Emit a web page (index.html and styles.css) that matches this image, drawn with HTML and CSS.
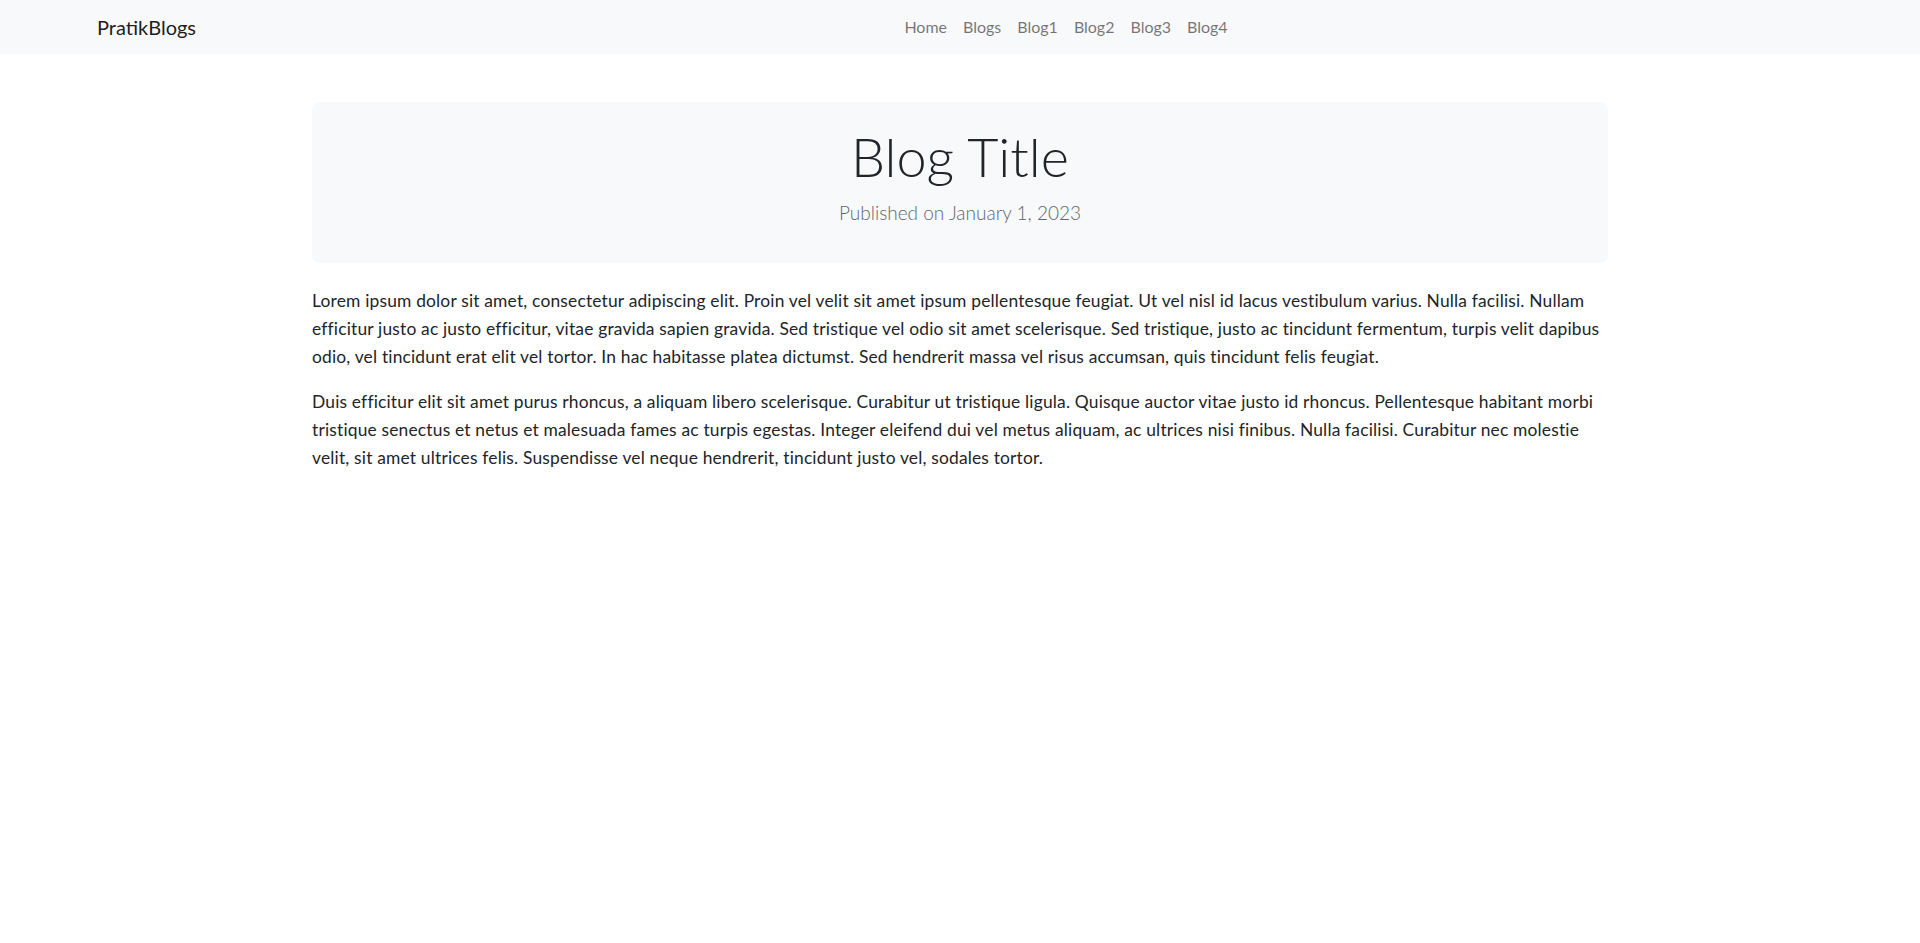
FILE: index.html
```html
<!DOCTYPE html>
<html lang="en">
<head>
<meta charset="utf-8">
<title>PratikBlogs</title>
<link rel="stylesheet" href="styles.css">
</head>
<body>
<nav class="navbar">
  <a class="brand" href="#">PratikBlogs</a>
  <ul class="nav">
    <li><a href="#">Home</a></li>
    <li><a href="#">Blogs</a></li>
    <li><a href="#">Blog1</a></li>
    <li><a href="#">Blog2</a></li>
    <li><a href="#">Blog3</a></li>
    <li><a href="#">Blog4</a></li>
  </ul>
</nav>
<main class="container">
  <header class="hero">
    <h1 class="hero-title">Blog Title</h1>
    <p class="hero-lead">Published on January 1, 2023</p>
  </header>
  <article class="post">
    <p>Lorem ipsum dolor sit amet, consectetur adipiscing elit. Proin vel velit sit amet ipsum pellentesque feugiat. Ut vel nisl id lacus vestibulum varius. Nulla facilisi. Nullam efficitur justo ac justo efficitur, vitae gravida sapien gravida. Sed tristique vel odio sit amet scelerisque. Sed tristique, justo ac tincidunt fermentum, turpis velit dapibus odio, vel tincidunt erat elit vel tortor. In hac habitasse platea dictumst. Sed hendrerit massa vel risus accumsan, quis tincidunt felis feugiat.</p>
    <p>Duis efficitur elit sit amet purus rhoncus, a aliquam libero scelerisque. Curabitur ut tristique ligula. Quisque auctor vitae justo id rhoncus. Pellentesque habitant morbi tristique senectus et netus et malesuada fames ac turpis egestas. Integer eleifend dui vel metus aliquam, ac ultrices nisi finibus. Nulla facilisi. Curabitur nec molestie velit, sit amet ultrices felis. Suspendisse vel neque hendrerit, tincidunt justo vel, sodales tortor.</p>
  </article>
</main>
</body>
</html>
```

FILE: styles.css
```css
* { box-sizing: border-box; }
html, body { margin: 0; padding: 0; }
body {
  font-family: Lato, "Open Sans", sans-serif;
  font-size: 16px;
  color: #212529;
  background: #fff;
}
a { text-decoration: none; }

.navbar {
  display: flex;
  align-items: center;
  height: 54px;
  padding-left: 97px;
  padding-bottom: 1px;
  background: #f8f9fa;
}
.brand {
  font-size: 20px;
  color: rgba(0,0,0,.9);
  margin-right: 16px;
}
.nav {
  display: flex;
  list-style: none;
  margin: 0 auto;
  padding: 0;
}
.nav a {
  display: block;
  padding: 8px;
  font-size: 16px;
  line-height: 24px;
  color: rgba(0,0,0,.55);
}

.container {
  width: 1296px;
  margin: 48px auto 0;
}
.hero {
  background: #f8f9fa;
  border-radius: 8px;
  height: 161px;
  padding-top: 23px;
  text-align: center;
}
.hero-title {
  margin: 0;
  font-size: 54px;
  font-weight: 300;
  line-height: 1.2;
  color: #212529;
}
.hero-lead {
  margin: 9px 0 0;
  font-size: 19px;
  font-weight: 300;
  line-height: 1.5;
  color: #5f676f;
}
.post {
  margin-top: 24px;
}
.post p {
  margin: 0 0 17px;
  font-size: 17.4px;
  letter-spacing: 0.18px;
  line-height: 28px;
}
```
